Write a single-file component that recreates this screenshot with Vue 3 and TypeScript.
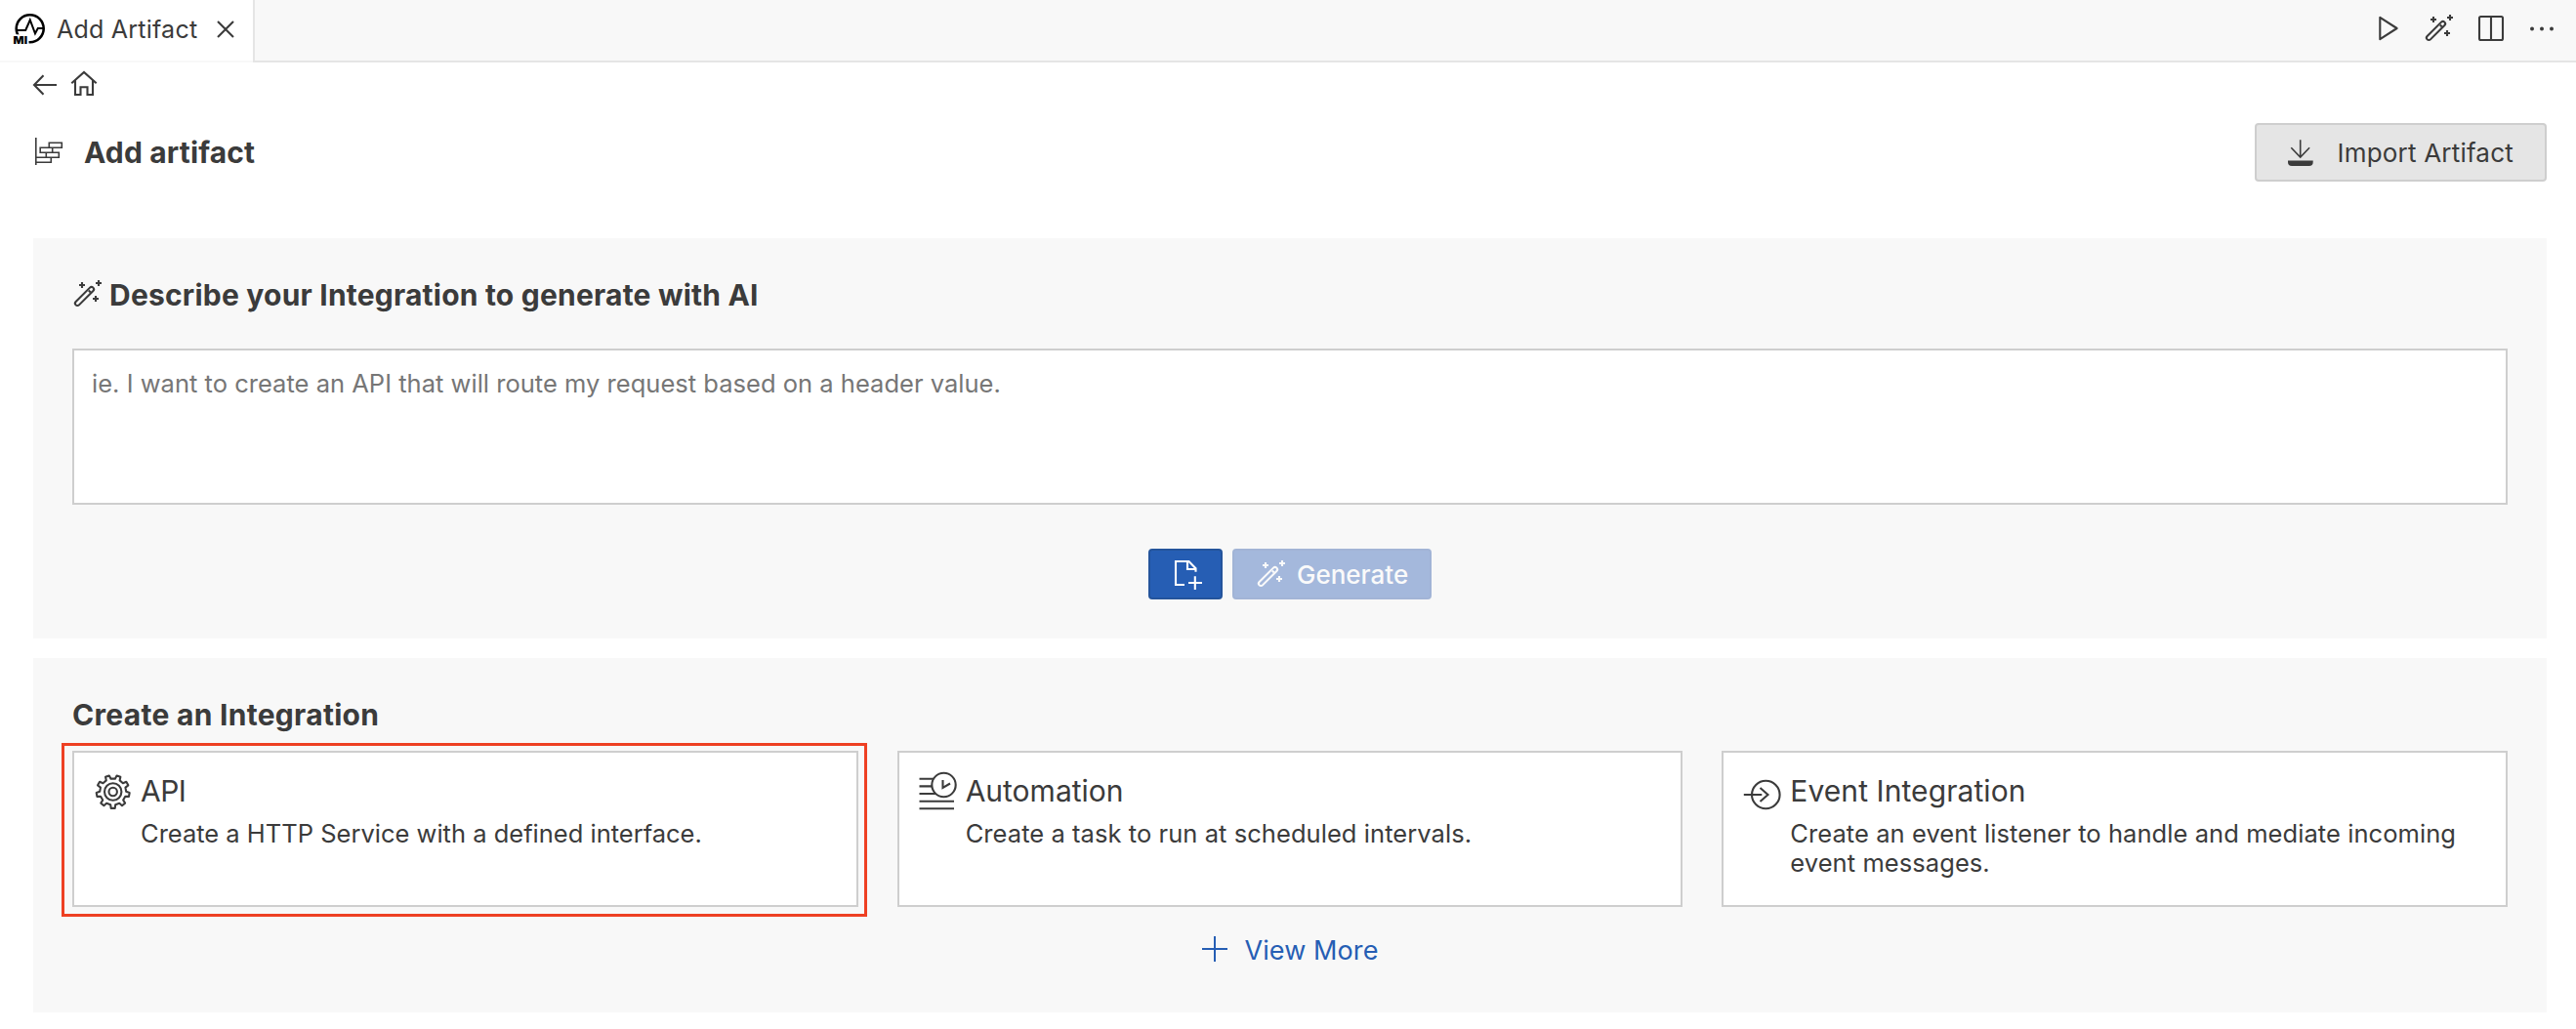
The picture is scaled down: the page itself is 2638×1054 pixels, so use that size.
<script setup lang="ts">
import { ref } from 'vue'

interface Card {
  id: 'api' | 'automation' | 'event'
  title: string
  text: string
  highlighted?: boolean
}

const prompt = ref('')

const cards: Card[] = [
  { id: 'api', title: 'API', text: 'Create a HTTP Service with a defined interface.', highlighted: true },
  { id: 'automation', title: 'Automation', text: 'Create a task to run at scheduled intervals.' },
  { id: 'event', title: 'Event Integration', text: 'Create an event listener to handle and mediate incoming event messages.' },
]

// Outline of a nine-toothed gear, one tooth pointing straight down.
function gearPath(cx: number, cy: number, outer: number, inner: number, teeth: number): string {
  const step = (Math.PI * 2) / teeth
  const points: string[] = []
  for (let i = 0; i < teeth; i++) {
    const mid = Math.PI / 2 + i * step
    const corners: [number, number][] = [
      [-0.27, inner],
      [-0.17, outer],
      [0.17, outer],
      [0.27, inner],
    ]
    for (const [offset, r] of corners) {
      const a = mid + offset * step
      points.push(`${(cx + r * Math.cos(a)).toFixed(2)} ${(cy + r * Math.sin(a)).toFixed(2)}`)
    }
  }
  return `M${points.join('L')}Z`
}

const gear = gearPath(19.7, 21, 17, 13.5, 9)
</script>

<template>
  <div class="window">
    <header class="tabbar">
      <div class="tab">
        <svg class="logo" width="36" height="36" viewBox="12 12 36 36">
          <circle cx="30.7" cy="29.3" r="14" fill="none" stroke="#000" stroke-width="2.6" />
          <path d="M18 31h8.2l4.6-10.5 5.2 13.8 2.8-5.3H45" fill="none" stroke="#000" stroke-width="2" />
          <rect x="12" y="35.3" width="17.5" height="12" fill="#fff" />
          <text x="13.6" y="45" textLength="14.5" lengthAdjust="spacingAndGlyphs" class="logo-text">MI</text>
        </svg>
        <span class="tab-name">Add Artifact</span>
        <svg class="close" width="18" height="18" viewBox="0 0 18 18"><path d="M1 1l16 16M17 1L1 17" /></svg>
      </div>
      <div class="tools">
        <svg width="20" height="26" viewBox="0 0 20 26"><path d="M1.3 1.8v22.4L18.6 13z" stroke-linejoin="round" /></svg>
        <svg class="t-wand" width="28" height="27" viewBox="0 0 28 27">
          <rect x="-2.05" y="14.15" width="25.1" height="4.7" rx="2.35" transform="rotate(-45 10.5 16.5)" />
          <path d="M14.8 10.4l2 2M5 5h6M8 2v6M22 3h6M25 0v6M19 19h6M22 16v6" />
        </svg>
        <svg width="26" height="26" viewBox="0 0 26 26"><rect x="1" y="1" width="24" height="24" rx="1.5" /><path d="M13 1v24" /></svg>
        <svg class="dots" width="26" height="26" viewBox="0 0 26 26"><circle cx="3" cy="13.5" r="2" /><circle cx="13" cy="13.5" r="2" /><circle cx="23" cy="13.5" r="2" /></svg>
      </div>
    </header>

    <main>
      <nav>
        <svg width="26" height="28" viewBox="34 72 26 28"><path d="M44.500 77.300L35 87l9.500 9.700M35 87h23" /></svg>
        <svg width="28" height="28" viewBox="72 72 28 28"><path d="M73.300 85.300L86 74l12.700 11.300M77 82.500V97h5.500v-7.700h7V97H95V82.500" /></svg>
      </nav>

      <div class="title-row">
        <svg class="title-icon" width="30" height="30" viewBox="36 140 30 30">
          <path d="M36.800 141v28M50.300 146.200h13v5h-13zM41.200 151.300h12.500v4.900H41.200zM47.300 156.300h13v5h-13zM36.800 161.300h15.500v5H36.800z" />
        </svg>
        <h1>Add artifact</h1>
        <button class="import">
          <svg width="28" height="30" viewBox="2342 142 28 30">
            <path d="M2355.700 144.300V162M2346.300 152.300l9.400 9.700 9.400-9.700" />
            <path class="tray" d="M2343 165.500h25.700v1.500q0 4-4 4h-17.700q-4 0-4-4z" />
          </svg>
          <span>Import Artifact</span>
        </button>
      </div>

      <section class="panel ai">
        <h2 class="ai-title">
          <svg width="28" height="27" viewBox="0 0 28 27">
            <rect x="-2.05" y="14.15" width="25.1" height="4.7" rx="2.35" transform="rotate(-45 10.5 16.5)" />
            <path d="M14.8 10.4l2 2M5 5h6M8 2v6M22 3h6M25 0v6M19 19h6M22 16v6" />
          </svg>
          <span>Describe your Integration to generate with AI</span>
        </h2>
        <textarea v-model="prompt" placeholder="ie. I want to create an API that will route my request based on a header value."></textarea>
        <div class="actions">
          <button class="attach" aria-label="Add file">
            <svg width="28" height="30" viewBox="0 0 28 30"><path d="M10 25H1V1h13.500l7 7.200v3.600M13 1v8h8.500M14 23h14M20.800 16.300V30" /></svg>
          </button>
          <button class="generate" disabled>
            <svg width="28" height="27" viewBox="0 0 28 27">
              <rect x="-2.05" y="14.15" width="25.1" height="4.7" rx="2.35" transform="rotate(-45 10.5 16.5)" />
              <path d="M14.8 10.4l2 2M5 5h6M8 2v6M22 3h6M25 0v6M19 19h6M22 16v6" />
            </svg>
            <span>Generate</span>
          </button>
        </div>
      </section>

      <section class="panel create">
        <h2>Create an Integration</h2>
        <div class="cards">
          <article v-for="card in cards" :key="card.id" class="card">
            <svg class="card-icon" width="42" height="42" viewBox="0 0 42 42">
              <template v-if="card.id === 'api'">
                <path :d="gear" stroke-linejoin="round" />
                <circle cx="19.7" cy="21" r="8.7" />
                <circle cx="19.7" cy="21" r="4.2" />
              </template>
              <template v-else-if="card.id === 'automation'">
                <circle cx="25.5" cy="14" r="12.2" />
                <path d="M.5 7.700h14.500M.5 15.400h13M.5 23h16.500M.5 30.700h35.500M.5 38.300h35.500M24.500 9v8l7.500-4.500" />
              </template>
              <template v-else>
                <circle cx="23.3" cy="24" r="14.3" />
                <path d="M.8 24h18.500M17.500 17l8 7-8 7" />
              </template>
            </svg>
            <div class="card-body">
              <h3 :class="card.id">{{ card.title }}</h3>
              <p :class="card.id">{{ card.text }}</p>
            </div>
            <div v-if="card.highlighted" class="highlight"></div>
          </article>
        </div>
        <a class="more">
          <svg width="26" height="26" viewBox="0 0 26 26"><path d="M0 13h26M13 0v26" /></svg>
          <span>View More</span>
        </a>
      </section>
    </main>
  </div>
</template>

<style>
body {
  background: #fff;
}
</style>

<style scoped>
.window {
  box-sizing: border-box;
  width: 100%;
  height: 1054px;
  overflow: hidden;
  background: #fff;
  color: #3b3b3b;
  font-family: Inter, 'Liberation Sans', sans-serif;
}
.window * {
  box-sizing: border-box;
}
svg {
  display: block;
  flex: none;
  overflow: visible;
  fill: none;
  stroke: currentColor;
  stroke-width: 2.1;
}
h1,
h2,
h3,
p {
  margin: 0;
}
button {
  font-family: inherit;
}
span {
  white-space: nowrap;
}

.tabbar {
  display: flex;
  justify-content: space-between;
  height: 64px;
  background: linear-gradient(#e5e5e5, #e5e5e5) bottom / 100% 2px no-repeat #f8f8f8;
}
.tab {
  display: flex;
  align-items: center;
  width: 261px;
  padding: 0 0 5px 12px;
  background: #fff;
  border-right: 2px solid #e5e5e5;
  box-shadow: inset 0 -2px #f8f8f8;
}
.logo {
  margin-top: 1px;
  stroke: none;
}
.logo-text {
  fill: #000;
  font-size: 10.5px;
  font-weight: 900;
}
.tab-name {
  margin-left: 10px;
  font-size: 25px;
  letter-spacing: 0.23px;
}
.close {
  margin-left: 20px;
}
.tools {
  display: flex;
  align-items: center;
  gap: 26px;
  padding: 0 22px 7px 0;
}
.t-wand {
  margin-left: 2px;
}
.tools .dots {
  fill: currentColor;
  stroke: none;
}

main {
  padding: 0 30px 0 34px;
}
nav {
  display: flex;
  gap: 12px;
  height: 62px;
  padding-top: 8px;
}
.title-row {
  display: flex;
  align-items: center;
  height: 60px;
  margin-bottom: 58px;
}
.title-icon {
  margin: 0 0 2px 2px;
  stroke-width: 1.6;
}
h1 {
  margin-left: 20px;
  font-size: 30px;
  font-weight: 700;
  line-height: 60px;
  letter-spacing: 0.15px;
}
.import {
  display: flex;
  align-items: center;
  width: 299px;
  height: 60px;
  margin-left: auto;
  padding: 0 0 0 31px;
  background: #e5e5e5;
  border: 2px solid #cecece;
  border-radius: 4px;
  color: #3b3b3b;
  font-size: 26px;
  letter-spacing: 0.2px;
}
.import svg {
  stroke-width: 1.6;
}
.import .tray {
  fill: currentColor;
  stroke: none;
}
.import span {
  margin-left: 23.5px;
}

.panel {
  padding: 38px 40px 0;
  background: #f8f8f8;
}
h2 {
  font-size: 30px;
  font-weight: 700;
  line-height: 40px;
  letter-spacing: 0.29px;
}
.ai {
  height: 410px;
  margin-bottom: 20px;
}
.ai-title {
  display: flex;
  align-items: center;
  gap: 8px;
  padding-left: 2px;
  letter-spacing: 0.21px;
}
.ai-title svg {
  margin-bottom: 3px;
}
textarea {
  display: block;
  width: 100%;
  height: 160px;
  margin: 35px 0 45px;
  padding: 18px;
  background: #fff;
  border: 2px solid #cecece;
  border-radius: 0;
  outline: none;
  resize: none;
  color: #3b3b3b;
  font: 25.5px/32px Inter, 'Liberation Sans', sans-serif;
  letter-spacing: 0.02px;
}
textarea::placeholder {
  color: #767676;
  opacity: 1;
}
.actions {
  display: flex;
  justify-content: center;
  gap: 10px;
}
.actions button {
  display: flex;
  align-items: center;
  height: 52px;
  border-radius: 4px;
}
.attach {
  width: 76px;
  padding: 2px 0 0 25px;
  background: #265eb4;
  border: 2px solid #24549c;
  color: #fff;
}
.generate {
  width: 204px;
  padding: 0 0 0 23.5px;
  background: #a4b8dc;
  border: 2px solid #a2b4d6;
  color: #fafafa;
  font-size: 26px;
  font-weight: 500;
  letter-spacing: 0;
}
.generate svg {
  margin-bottom: 1px;
}
.generate span {
  margin-left: 12.5px;
}

.create {
  height: 363px;
}
.cards {
  display: grid;
  grid-template-columns: repeat(3, 1fr);
  gap: 40px;
  margin: 17px 0 26px;
}
.card {
  position: relative;
  display: flex;
  height: 160px;
  padding: 19px 20px 0;
  background: #fff;
  border: 2px solid #cecece;
}
.card-body {
  margin-left: 6px;
  padding-top: 2px;
}
h3 {
  font-size: 30px;
  font-weight: 400;
  line-height: 36px;
}
h3.api {
  letter-spacing: -0.5px;
}
h3.event {
  letter-spacing: 0.08px;
}
p {
  margin-top: 11px;
  font-size: 25.5px;
  line-height: 30px;
}
p.automation {
  letter-spacing: 0.06px;
}
p.event {
  letter-spacing: 0.07px;
}
.highlight {
  position: absolute;
  inset: -10px -11px -12px -13px;
  border: 3px solid #ee4023;
  pointer-events: none;
}
.more {
  display: flex;
  align-items: center;
  justify-content: center;
  gap: 17px;
  height: 36px;
  padding-left: 1px;
  color: #265eb4;
  font-size: 27px;
  letter-spacing: 0.1px;
}
.more svg {
  margin-bottom: 2px;
  stroke-width: 2;
}
</style>
